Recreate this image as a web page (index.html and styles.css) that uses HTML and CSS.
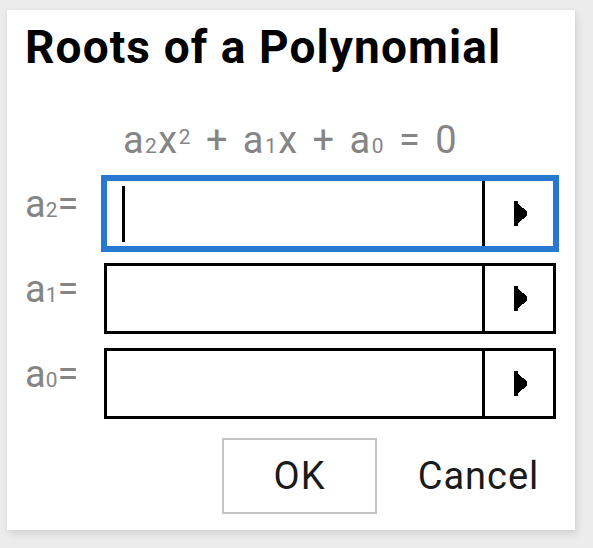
FILE: index.html
```html
<!DOCTYPE html>
<html lang="en">
<head>
<meta charset="utf-8">
<title>Roots of a Polynomial</title>
<link rel="stylesheet" href="styles.css">
</head>
<body>
<div class="dialog">
  <h1 class="title">Roots of a Polynomial</h1>
  <div class="formula">a<span class="sub">2</span>x<span class="sup">2</span> + a<span class="sub">1</span>x + a<span class="sub">0</span> = 0</div>
  <div class="rows">
    <div class="row">
      <div class="label">a<span class="sub">2</span>=</div>
      <div class="field focused">
        <div class="entry"><span class="cursor"></span></div>
        <div class="arrow"><svg width="13" height="25" viewBox="0 0 13 25" shape-rendering="crispEdges"><polygon points="0,0 4,0 4,3 13,10 13,15 4,22 4,25 0,25" fill="#000"/></svg></div>
      </div>
    </div>
    <div class="row">
      <div class="label">a<span class="sub">1</span>=</div>
      <div class="field">
        <div class="entry"></div>
        <div class="arrow"><svg width="13" height="25" viewBox="0 0 13 25" shape-rendering="crispEdges"><polygon points="0,0 4,0 4,3 13,10 13,15 4,22 4,25 0,25" fill="#000"/></svg></div>
      </div>
    </div>
    <div class="row">
      <div class="label">a<span class="sub">0</span>=</div>
      <div class="field">
        <div class="entry"></div>
        <div class="arrow"><svg width="13" height="25" viewBox="0 0 13 25" shape-rendering="crispEdges"><polygon points="0,0 4,0 4,3 13,10 13,15 4,22 4,25 0,25" fill="#000"/></svg></div>
      </div>
    </div>
  </div>
  <div class="buttons">
    <button class="btn ok">OK</button>
    <button class="btn cancel">Cancel</button>
  </div>
</div>
</body>
</html>
```

FILE: styles.css
```css
html, body {
  margin: 0;
  padding: 0;
}
body {
  background: #ececec;
  width: 593px;
  height: 548px;
  overflow: hidden;
  font-family: Roboto, "Liberation Sans", sans-serif;
}
.dialog {
  margin: 10px 0 0 7px;
  width: 568px;
  box-sizing: border-box;
  padding: 10px 19px 16px 18px;
  background: #fff;
  box-shadow: 2px 4px 8px rgba(0, 0, 0, 0.10), 0 0 3px rgba(0, 0, 0, 0.06);
  display: flex;
  flex-direction: column;
}
.title {
  margin: 0;
  font-size: 46px;
  font-weight: 700;
  letter-spacing: 1.1px;
  line-height: 54px;
  height: 54px;
  color: #000;
}
.formula {
  margin-top: 44px;
  font-size: 38px;
  line-height: 44px;
  height: 44px;
  color: #858585;
  text-align: center;
  white-space: pre;
  letter-spacing: 1.5px;
  word-spacing: 3px;
}
.sub {
  font-size: 0.55em;
  vertical-align: baseline;
}
.sup {
  font-size: 0.55em;
  position: relative;
  top: -0.45em;
  vertical-align: baseline;
}
.rows {
  margin-top: 16px;
  display: flex;
  flex-direction: column;
  gap: 14px;
}
.row {
  display: flex;
  height: 71px;
}
.label {
  width: 79px;
  flex: none;
  font-size: 38px;
  line-height: 44px;
  padding-top: 4px;
  color: #858585;
}
.field {
  flex: 1;
  display: flex;
  border: 3px solid #000;
  box-sizing: border-box;
  height: 71px;
}
.field.focused {
  border-color: #2877d1;
  box-shadow: 0 0 0 3px #2877d1;
}
.entry {
  flex: 1;
  display: flex;
  align-items: center;
}
.cursor {
  display: block;
  margin-left: 15px;
  width: 3px;
  height: 56px;
  background: #000;
}
.arrow {
  width: 66px;
  flex: none;
  border-left: 3px solid #000;
  display: flex;
  align-items: center;
  justify-content: center;
  padding-left: 2px;
  box-sizing: content-box;
}
.arrow svg {
  display: block;
}
.buttons {
  margin-top: 19px;
  display: flex;
  justify-content: flex-end;
  gap: 24px;
}
.btn {
  width: 155px;
  height: 76px;
  box-sizing: border-box;
  font-family: Roboto, "Liberation Sans", sans-serif;
  font-size: 38px;
  letter-spacing: 1px;
  color: #1a1a1a;
  background: #fff;
  padding: 0;
  margin: 0;
}
.ok {
  border: 2px solid #c4c4c4;
}
.cancel {
  border: none;
}
```
